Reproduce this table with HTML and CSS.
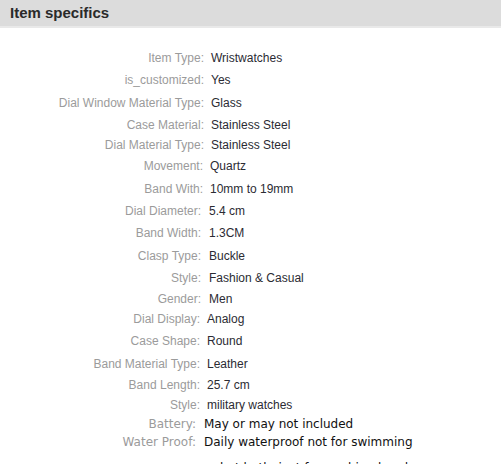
FILE: index.html
```html
<!DOCTYPE html>
<html>
<head>
<meta charset="utf-8">
<link rel="stylesheet" href="styles.css">
</head>
<body>
<div class="header"><h2 class="title">Item specifics</h2></div>
<ul class="specs">
  <li class="row g1 h22"><span class="label">Item Type:</span><span class="value">Wristwatches</span></li>
  <li class="row g1 h23"><span class="label">is_customized:</span><span class="value">Yes</span></li>
  <li class="row g1 h22"><span class="label">Dial Window Material Type:</span><span class="value">Glass</span></li>
  <li class="row g1 h22"><span class="label">Case Material:</span><span class="value">Stainless Steel</span></li>
  <li class="row g1 h19"><span class="label">Dial Material Type:</span><span class="value">Stainless Steel</span></li>
  <li class="row g2 h23"><span class="label">Movement:</span><span class="value">Quartz</span></li>
  <li class="row g2 h22"><span class="label">Band With:</span><span class="value">10mm to 19mm</span></li>
  <li class="row g3 h22"><span class="label">Dial Diameter:</span><span class="value">5.4 cm</span></li>
  <li class="row g3 h23"><span class="label">Band Width:</span><span class="value">1.3CM</span></li>
  <li class="row g3 h22"><span class="label">Clasp Type:</span><span class="value">Buckle</span></li>
  <li class="row g3 h23"><span class="label">Style:</span><span class="value">Fashion &amp; Casual</span></li>
  <li class="row g3 h18"><span class="label">Gender:</span><span class="value">Men</span></li>
  <li class="row g4 h22"><span class="label">Dial Display:</span><span class="value">Analog</span></li>
  <li class="row g4 h23"><span class="label">Case Shape:</span><span class="value">Round</span></li>
  <li class="row g4 h22"><span class="label">Band Material Type:</span><span class="value">Leather</span></li>
  <li class="row g4 h20"><span class="label">Band Length:</span><span class="value">25.7 cm</span></li>
  <li class="row g4 h20"><span class="label">Style:</span><span class="value">military watches</span></li>
  <li class="row g5 battery alt"><span class="label">Battery:</span><span class="value">May or may not included</span></li>
  <li class="row g5 water alt"><span class="label">Water Proof:</span><span class="value">Daily waterproof not for swimming or hot bath, just for washing hands</span></li>
</ul>
</body>
</html>
```

FILE: styles.css
```css
html, body {
  margin: 0;
  padding: 0;
  background: #ffffff;
}
body {
  font-family: "Liberation Sans", Arial, sans-serif;
  font-size: 12px;
  color: #333333;
}
.header {
  height: 26px;
  background: #dcdcdc;
  border-bottom: 2px solid #e9e9e9;
  display: flex;
  align-items: center;
}
.title {
  margin: 0;
  padding-left: 10px;
  font-size: 15px;
  font-weight: bold;
  color: #2a2a2a;
  line-height: 26px;
}
.specs {
  list-style: none;
  margin: 0;
  padding: 19px 0 0 0;
}
.row {
  display: flex;
  align-items: center;
  white-space: nowrap;
}
.label {
  flex: none;
  text-align: right;
  color: #9b9b9b;
}
.value {
  color: #2b2b33;
}
.g1 .label { width: 204px; }
.g1 .value { margin-left: 7px; }
.g2 .label { width: 203px; }
.g2 .value { margin-left: 7px; }
.g3 .label { width: 201px; }
.g3 .value { margin-left: 8px; }
.g4 .label { width: 200px; }
.g4 .value { margin-left: 7px; }
.g5 .label { width: 196px; }
.g5 .value { margin-left: 8px; }
.h18 { height: 18px; line-height: 18px; }
.h19 { height: 19px; line-height: 19px; }
.h20 { height: 20px; line-height: 20px; }
.h22 { height: 22px; line-height: 22px; }
.h23 { height: 23px; line-height: 23px; }
.battery { height: 14px; line-height: 18px; }
.water { line-height: 26px; }
.alt {
  font-family: "DejaVu Sans", Verdana, sans-serif;
  font-size: 12px;
  align-items: flex-start;
}
.alt .value {
  color: #111111;
  white-space: normal;
  width: 220px;
}
```
